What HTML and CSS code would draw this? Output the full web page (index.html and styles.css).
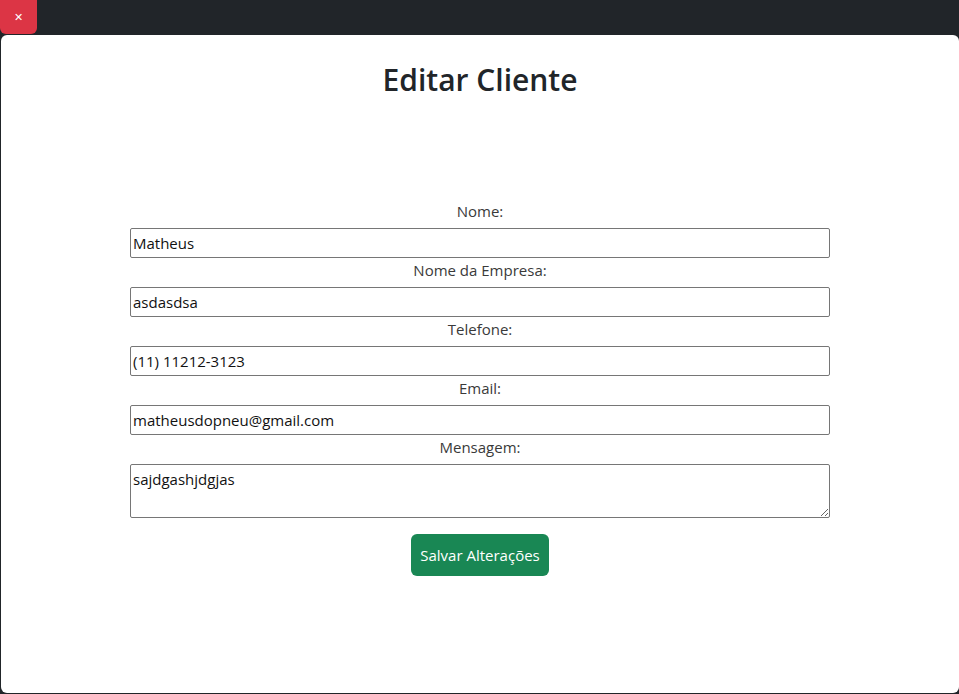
FILE: index.html
```html
<!DOCTYPE html>
<html lang="pt-BR">
<head>
<meta charset="utf-8">
<title>Editar Cliente</title>
<link rel="stylesheet" href="styles.css">
</head>
<body>
<div class="topbar">
  <button class="close-btn" type="button">&#x2715;</button>
</div>
<div class="modal">
  <h1 class="title">Editar Cliente</h1>
  <form class="form">
    <label class="label" for="nome">Nome:</label>
    <input class="field" id="nome" type="text" value="Matheus">
    <label class="label" for="empresa">Nome da Empresa:</label>
    <input class="field" id="empresa" type="text" value="asdasdsa">
    <label class="label" for="tel">Telefone:</label>
    <input class="field" id="tel" type="text" value="(11) 11212-3123">
    <label class="label" for="email">Email:</label>
    <input class="field" id="email" type="text" value="matheusdopneu@gmail.com">
    <label class="label" for="msg">Mensagem:</label>
    <textarea class="field area" id="msg">sajdgashjdgjas</textarea>
    <button class="save" type="button">Salvar Alterações</button>
  </form>
</div>
</body>
</html>
```
FILE: styles.css
```css
html, body {
  margin: 0;
  padding: 0;
}
body {
  background: #212529;
  font-family: "Open Sans", "Noto Sans", sans-serif;
  color: #212529;
  height: 694px;
  overflow: hidden;
}
.topbar {
  height: 35px;
  display: flex;
}
.close-btn {
  width: 37px;
  height: 34px;
  background: #dc3545;
  color: #fff;
  border: none;
  border-radius: 0 0 6px 6px;
  font-size: 11px;
  font-weight: 700;
  padding: 0;
  font-family: "DejaVu Sans", sans-serif;
}
.modal {
  margin-left: 1px;
  height: 658px;
  background: #fff;
  border-radius: 6px;
  padding-top: 26px;
  box-sizing: border-box;
}
.title {
  margin: 0;
  text-align: center;
  font-size: 30px;
  line-height: 38px;
  font-weight: 600;
  color: #212529;
}
.form {
  width: 700px;
  margin: 100px auto 0;
  display: flex;
  flex-direction: column;
  align-items: center;
}
.label {
  display: block;
  font-size: 15px;
  line-height: 24px;
  margin-bottom: 5px;
  color: #3a3a3a;
}
.field {
  display: block;
  width: 700px;
  height: 30px;
  box-sizing: border-box;
  border: 1px solid #767676;
  border-radius: 2px;
  padding: 1px 2px;
  font-family: "Open Sans", "Noto Sans", sans-serif;
  font-size: 15px;
  color: #111;
  background: #fff;
}
.area {
  height: 54px;
  resize: vertical;
  padding: 4px 2px;
}
.save {
  margin-top: 16px;
  width: 138px;
  height: 42px;
  border: none;
  border-radius: 6px;
  background: #198754;
  color: #fff;
  font-family: "Open Sans", "Noto Sans", sans-serif;
  font-size: 15px;
  padding: 0;
}
```
